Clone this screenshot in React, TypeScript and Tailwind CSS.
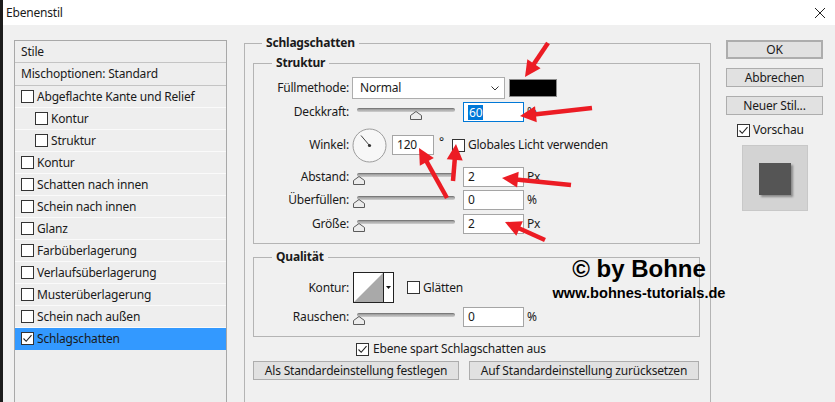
import React from "react";

const ui = "font-['Noto_Sans',sans-serif] text-[12px] tracking-[-0.2px] text-[#1a1a1a]";

const Check = ({ checked = false, className = "" }: { checked?: boolean; className?: string }) => (
  <span className={`inline-flex h-[13px] w-[13px] shrink-0 items-center justify-center border border-[#333] bg-white ${className}`}>
    {checked && (
      <svg width="11" height="11" viewBox="0 0 11 11">
        <path d="M1.5 5.5 L4.2 8.3 L9.5 2.2" fill="none" stroke="#222" strokeWidth="1.1" />
      </svg>
    )}
  </span>
);

const Slider = ({ pos }: { pos: number }) => (
  <div className="relative ml-[4px] h-[14px] w-[102px] shrink-0">
    <div className="absolute left-[4px] top-[3px] h-[4px] w-[98px] rounded-[2px] border-t border-[#7a7a7a] bg-gradient-to-b from-[#9a9a9a] to-[#d0d0d0]" />
    <svg className="absolute top-[6px]" style={{ left: pos }} width="12" height="9" viewBox="0 0 12 9">
      <path d="M6 0.5 L11.5 4.5 L11.5 8.5 L0.5 8.5 L0.5 4.5 Z" fill="#ececec" stroke="#5a5a5a" />
    </svg>
  </div>
);

const Field = ({ value, active = false, w = 61 }: { value: string; active?: boolean; w?: number }) => (
  <div
    className={`flex h-[20px] shrink-0 items-center bg-white pl-[4px] ${active ? "border border-[#0078d7]" : "border border-[#a5a5a5]"}`}
    style={{ width: w }}
  >
    {active ? <span className="bg-[#0078d7] px-[1px] leading-[15px] text-white">{value}</span> : <span>{value}</span>}
  </div>
);

const Label = ({ children }: { children: React.ReactNode }) => (
  <span className="w-[95px] shrink-0 text-right">{children}</span>
);

const SliderRow = ({ label, pos, value, unit, cls = "" }: { label: string; pos: number; value: string; unit: string; cls?: string }) => (
  <div className={`flex h-[22px] items-center ${cls}`}>
    <Label>{label}</Label>
    <Slider pos={pos} />
    <div className="ml-[8px]">
      <Field value={value} />
    </div>
    <span className="ml-[3px]">{unit}</span>
  </div>
);

const styles: { name: string; indent?: boolean; checked?: boolean; active?: boolean }[] = [
  { name: "Abgeflachte Kante und Relief" },
  { name: "Kontur", indent: true },
  { name: "Struktur", indent: true },
  { name: "Kontur" },
  { name: "Schatten nach innen" },
  { name: "Schein nach innen" },
  { name: "Glanz" },
  { name: "Farbüberlagerung" },
  { name: "Verlaufsüberlagerung" },
  { name: "Musterüberlagerung" },
  { name: "Schein nach außen" },
  { name: "Schlagschatten", checked: true, active: true },
];

const arrows = [
  [548, 43, 525, 77],
  [592, 108, 520, 116],
  [447, 198, 419, 148],
  [453, 181, 456, 144],
  [571, 185, 502, 178],
  [545, 240, 505, 222],
];

function Arrow({ a }: { a: number[] }) {
  const [x1, y1, x2, y2] = a;
  const dx = x2 - x1;
  const dy = y2 - y1;
  const L = Math.hypot(dx, dy);
  const ux = dx / L;
  const uy = dy / L;
  const h = 16;
  const w = 8;
  const bx = x2 - ux * h;
  const by = y2 - uy * h;
  const pts = `${x2},${y2} ${bx - uy * w},${by + ux * w} ${bx + uy * w},${by - ux * w}`;
  return (
    <g>
      <line x1={x1} y1={y1} x2={bx + ux * 2} y2={by + uy * 2} stroke="#ec1c24" strokeWidth={4.5} />
      <polygon points={pts} fill="#ec1c24" />
    </g>
  );
}

const Btn = ({ children, className = "" }: { children: React.ReactNode; className?: string }) => (
  <div className={`flex items-center justify-center border border-[#adadad] bg-[#e1e1e1] ${className}`}>{children}</div>
);

export default function App() {
  return (
    <div className={`relative flex h-[402px] w-[835px] overflow-hidden bg-[#f0f0f0] ${ui}`}>
      <div className="h-full w-[3px] shrink-0 bg-[#1c1c1c]" />
      <div className="flex flex-1 flex-col">
        {/* title bar */}
        <div className="flex h-[25px] shrink-0 items-center justify-between bg-white pl-[3px] pr-[9px]">
          <span>Ebenenstil</span>
          <svg width="12" height="12" viewBox="0 0 12 12">
            <path d="M1 1 L11 11 M11 1 L1 11" stroke="#222" strokeWidth="1" />
          </svg>
        </div>

        <div className="flex flex-1">
          {/* Stile list */}
          <div className="ml-[11px] mt-[15px] h-[400px] w-[213px] shrink-0 border border-[#a8a8a8] bg-[#eeeeee]">
            <div className="flex h-[22px] items-center border-b border-[#c4c4c4] pl-[6px]">Stile</div>
            <div className="flex h-[23px] items-center border-b border-[#c4c4c4] pl-[6px]">Mischoptionen: Standard</div>
            {styles.map((s, i) => (
              <div
                key={i}
                className={`flex h-[22px] items-center border-b ${s.active ? "border-[#3399ff] bg-[#3399ff]" : "border-[#fafafa]"} ${s.indent ? "pl-[20px]" : "pl-[6px]"}`}
              >
                <Check checked={s.checked} />
                <span className="ml-[3px]">{s.name}</span>
              </div>
            ))}
          </div>

          {/* Schlagschatten */}
          <fieldset className="ml-[17px] mt-[10px] h-[420px] w-[467px] shrink-0 border border-[#b4b4b4] p-0">
            <legend className="ml-[17px] px-[4px] text-[12px] font-bold leading-[16px]">Schlagschatten</legend>

            <fieldset className="ml-[8px] mt-[4px] w-[447px] border border-[#b4b4b4] p-0 pb-[8px] pt-[6px]">
              <legend className="ml-[18px] px-[4px] font-bold leading-[16px]">Struktur</legend>
              <div className="flex h-[22px] items-center">
                <Label>Füllmethode:</Label>
                <div className="ml-[3px] flex h-[22px] w-[153px] items-center justify-between border border-[#adadad] bg-white pl-[7px] pr-[5px]">
                  <span>Normal</span>
                  <svg width="8" height="5" viewBox="0 0 8 5">
                    <path d="M0.5 0.5 L4 4 L7.5 0.5" fill="none" stroke="#333" />
                  </svg>
                </div>
                <div className="ml-[4px] h-[18px] w-[48px] border border-[#8a8a8a] bg-black" />
              </div>
              <div className="mt-[2px] flex h-[22px] items-center">
                <Label>Deckkraft:</Label>
                <Slider pos={57} />
                <div className="ml-[8px]">
                  <Field value="60" active />
                </div>
                <span className="ml-[3px]">%</span>
              </div>
              <div className="mt-[5px] flex h-[34px] items-center">
                <Label>Winkel:</Label>
                <svg className="ml-[3px] shrink-0" width="35" height="35" viewBox="0 0 35 35">
                  <circle cx="17.5" cy="17.5" r="16.5" fill="#f7f7f7" stroke="#9c9c9c" />
                  <line x1="17.5" y1="17.5" x2="9" y2="7.5" stroke="#444" strokeWidth="1" />
                  <circle cx="17.5" cy="17.5" r="1.6" fill="#333" />
                </svg>
                <div className="ml-[5px]">
                  <Field value="120" w={42} />
                </div>
                <span className="mb-[6px] ml-[5px]">°</span>
                <Check className="ml-[8px]" />
                <span className="ml-[3px]">Globales Licht verwenden</span>
              </div>
              <SliderRow label="Abstand:" pos={0} value="2" unit="Px" cls="mt-[4px]" />
              <SliderRow label="Überfüllen:" pos={0} value="0" unit="%" cls="mt-[1px]" />
              <SliderRow label="Größe:" pos={0} value="2" unit="Px" cls="mt-[2px]" />
            </fieldset>

            <fieldset className="ml-[8px] mt-[5px] w-[447px] border border-[#b4b4b4] p-0 pb-[8px] pt-[7px]">
              <legend className="ml-[18px] px-[4px] font-bold leading-[16px]">Qualität</legend>
              <div className="flex h-[31px] items-center">
                <Label>Kontur:</Label>
                <div className="ml-[4px] flex h-[31px] w-[41px] shrink-0 border border-[#222] bg-white">
                  <svg width="29" height="29" viewBox="0 0 29 29">
                    <polygon points="0,29 29,0 29,29" fill="#a9a9a9" />
                  </svg>
                  <div className="flex w-[10px] items-center justify-center border-l border-[#222]">
                    <svg width="5" height="3" viewBox="0 0 5 3">
                      <polygon points="0,0 5,0 2.5,3" fill="#111" />
                    </svg>
                  </div>
                </div>
                <Check className="ml-[13px]" />
                <span className="ml-[3px]">Glätten</span>
              </div>
              <SliderRow label="Rauschen:" pos={0} value="0" unit="%" cls="mt-[3px]" />
            </fieldset>

            <div className="ml-[111px] mt-[4px] flex h-[16px] items-center">
              <Check checked />
              <span className="ml-[4px]">Ebene spart Schlagschatten aus</span>
            </div>
            <div className="mt-[4px] flex">
              <Btn className="ml-[8px] h-[19px] w-[206px]">Als Standardeinstellung festlegen</Btn>
              <Btn className="ml-[10px] h-[19px] w-[230px]">Auf Standardeinstellung zurücksetzen</Btn>
            </div>
          </fieldset>

          {/* buttons */}
          <div className="ml-[15px] mt-[15px] flex w-[97px] shrink-0 flex-col">
            <Btn className="h-[19px] border-2 border-[#0078d7]">OK</Btn>
            <Btn className="mt-[9px] h-[19px]">Abbrechen</Btn>
            <Btn className="mt-[9px] h-[19px]">Neuer Stil...</Btn>
            <div className="mt-[8px] flex h-[14px] items-center pl-[11px]">
              <Check checked />
              <span className="ml-[3px]">Vorschau</span>
            </div>
            <div className="ml-[16px] mt-[8px] flex h-[66px] w-[66px] items-start border border-[#c8c8c8] bg-[#d3d3d3] pl-[16px] pt-[17px]">
              <div className="h-[32px] w-[32px] bg-[#555555] shadow-[2px_2px_2px_rgba(0,0,0,0.35)]" />
            </div>
          </div>
        </div>
      </div>

      {/* watermark */}
      <div className="absolute left-[552px] top-[257px] w-[174px] text-center font-['Liberation_Sans',Arial,sans-serif] font-bold tracking-normal text-black">
        <div className="text-[24px] leading-[24px]">© by Bohne</div>
        <div className="mt-[3px] whitespace-nowrap text-[14.6px] leading-[18px]">www.bohnes-tutorials.de</div>
      </div>

      {/* arrows */}
      <svg className="pointer-events-none absolute left-0 top-0" width="835" height="402">
        {arrows.map((a, i) => (
          <Arrow key={i} a={a} />
        ))}
      </svg>
    </div>
  );
}
